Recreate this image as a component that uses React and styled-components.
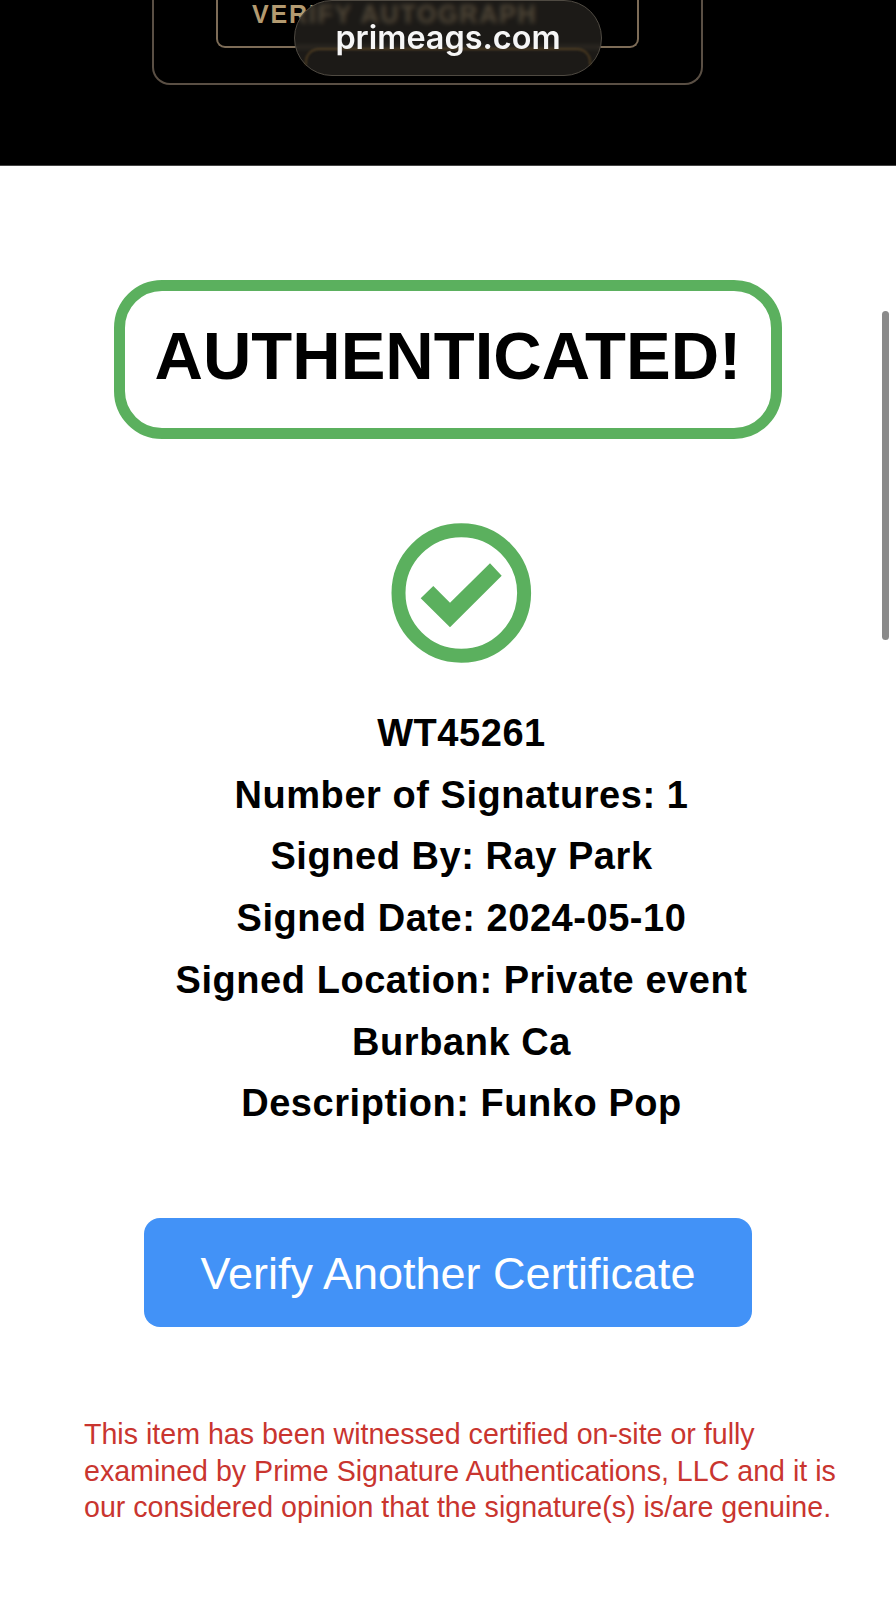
import React from "react";
import styled, { createGlobalStyle } from "styled-components";

const GlobalStyle = createGlobalStyle`
  html, body {
    margin: 0;
    padding: 0;
    background: #fff;
  }
`;

const Page = styled.div`
  position: relative;
  width: 896px;
  height: 1600px;
  overflow: hidden;
  background: #fff;
  font-family: "Liberation Sans", Arial, sans-serif;
`;

const Header = styled.header`
  position: relative;
  height: 166px;
  padding-left: 152px;
  box-sizing: border-box;
  background: #000;
  border-bottom: 1px solid #444;
`;

const OuterFrame = styled.div`
  width: 551px;
  height: 85px;
  padding-left: 62px;
  box-sizing: border-box;
  border: 2px solid #5a4f44;
  border-top: 0;
  border-radius: 0 0 18px 18px;
`;

const InnerFrame = styled.div`
  width: 423px;
  height: 48px;
  padding-left: 34px;
  box-sizing: border-box;
  border: 2px solid #7d6c57;
  border-top: 0;
  border-radius: 0 0 9px 9px;
`;

const FrameLabel = styled.div`
  padding-top: 2px;
  font-size: 25px;
  font-weight: 700;
  line-height: 24px;
  letter-spacing: 1.8px;
  white-space: nowrap;
  color: #b39a70;
`;

const DomainPill = styled.div`
  position: absolute;
  top: 0;
  left: 294px;
  width: 308px;
  height: 76px;
  display: flex;
  align-items: center;
  justify-content: center;
  box-sizing: border-box;
  padding-bottom: 1px;
  border: 1px solid #4f4a42;
  border-radius: 38px;
  background: rgba(40, 37, 33, 0.7);
  backdrop-filter: blur(2.5px);

  &::before {
    content: "";
    position: absolute;
    left: 10px;
    right: 10px;
    top: 47px;
    height: 15px;
    border: 2px solid rgba(120, 88, 40, 0.5);
    border-bottom: 0;
    border-radius: 14px 14px 0 0;
    filter: blur(1px);
  }
`;

const DomainText = styled.span`
  position: relative;
  color: #f6f6f6;
  font-family: Inter, "Liberation Sans", sans-serif;
  font-size: 32.4px;
  font-weight: 600;
`;

const Content = styled.main`
  display: flex;
  flex-direction: column;
  align-items: center;
  padding-top: 114px;
`;

const StatusBadge = styled.div`
  width: 668px;
  height: 159px;
  display: flex;
  align-items: flex-start;
  justify-content: center;
  box-sizing: border-box;
  border: 11px solid #5bb05e;
  border-radius: 48px;
  padding-top: 25px;
  font-size: 67px;
  font-weight: 700;
  line-height: 80px;
  color: #000;
`;

const CheckIcon = styled.svg`
  display: block;
  width: 141px;
  height: 141px;
  margin: 84px 0 0 27px;
`;

const Details = styled.div`
  margin: 39px 0 0 27px;
  text-align: center;
  font-size: 38px;
  font-weight: 700;
  line-height: 61.7px;
  letter-spacing: 0.55px;
  color: #000;
`;

const DetailLine = styled.div`
  white-space: nowrap;
`;

const VerifyButton = styled.button`
  width: 608px;
  height: 109px;
  margin-top: 83px;
  padding: 3px 0 0;
  border: 0;
  border-radius: 16px;
  background: #4292f7;
  color: #fff;
  font-family: "Liberation Sans", Arial, sans-serif;
  font-size: 45px;
  font-weight: 400;
`;

const Disclaimer = styled.p`
  align-self: flex-start;
  margin: 89px 0 0 84px;
  font-size: 28.6px;
  line-height: 36.7px;
  white-space: pre-line;
  color: #c9352f;
`;

const Scrollbar = styled.div`
  position: absolute;
  top: 311px;
  right: 7px;
  width: 7px;
  height: 329px;
  border-radius: 4px;
  background: #8a8a8a;
`;

const detailLines = [
  "WT45261",
  "Number of Signatures: 1",
  "Signed By: Ray Park",
  "Signed Date: 2024-05-10",
  "Signed Location: Private event",
  "Burbank Ca",
  "Description: Funko Pop",
];

const App = () => (
  <Page>
    <GlobalStyle />
    <Header>
      <OuterFrame>
        <InnerFrame>
          <FrameLabel>VERIFY AUTOGRAPH</FrameLabel>
        </InnerFrame>
      </OuterFrame>
      <DomainPill>
        <DomainText>primeags.com</DomainText>
      </DomainPill>
    </Header>
    <Content>
      <StatusBadge>AUTHENTICATED!</StatusBadge>
      <CheckIcon viewBox="0 0 141 141">
        <circle cx="70.3" cy="70" r="62.8" fill="none" stroke="#5bb05e" strokeWidth="14" />
        <path d="M29.7 75.3 L42.3 63 L59 79.7 L99 40.3 L110.7 52.7 L59 104.3 Z" fill="#5bb05e" />
      </CheckIcon>
      <Details>
        {detailLines.map((line) => (
          <DetailLine key={line}>{line}</DetailLine>
        ))}
      </Details>
      <VerifyButton>Verify Another Certificate</VerifyButton>
      <Disclaimer>
        {"This item has been witnessed certified on-site or fully\nexamined by Prime Signature Authentications, LLC and it is\nour considered opinion that the signature(s) is/are genuine."}
      </Disclaimer>
    </Content>
    <Scrollbar />
  </Page>
);

export default App;
